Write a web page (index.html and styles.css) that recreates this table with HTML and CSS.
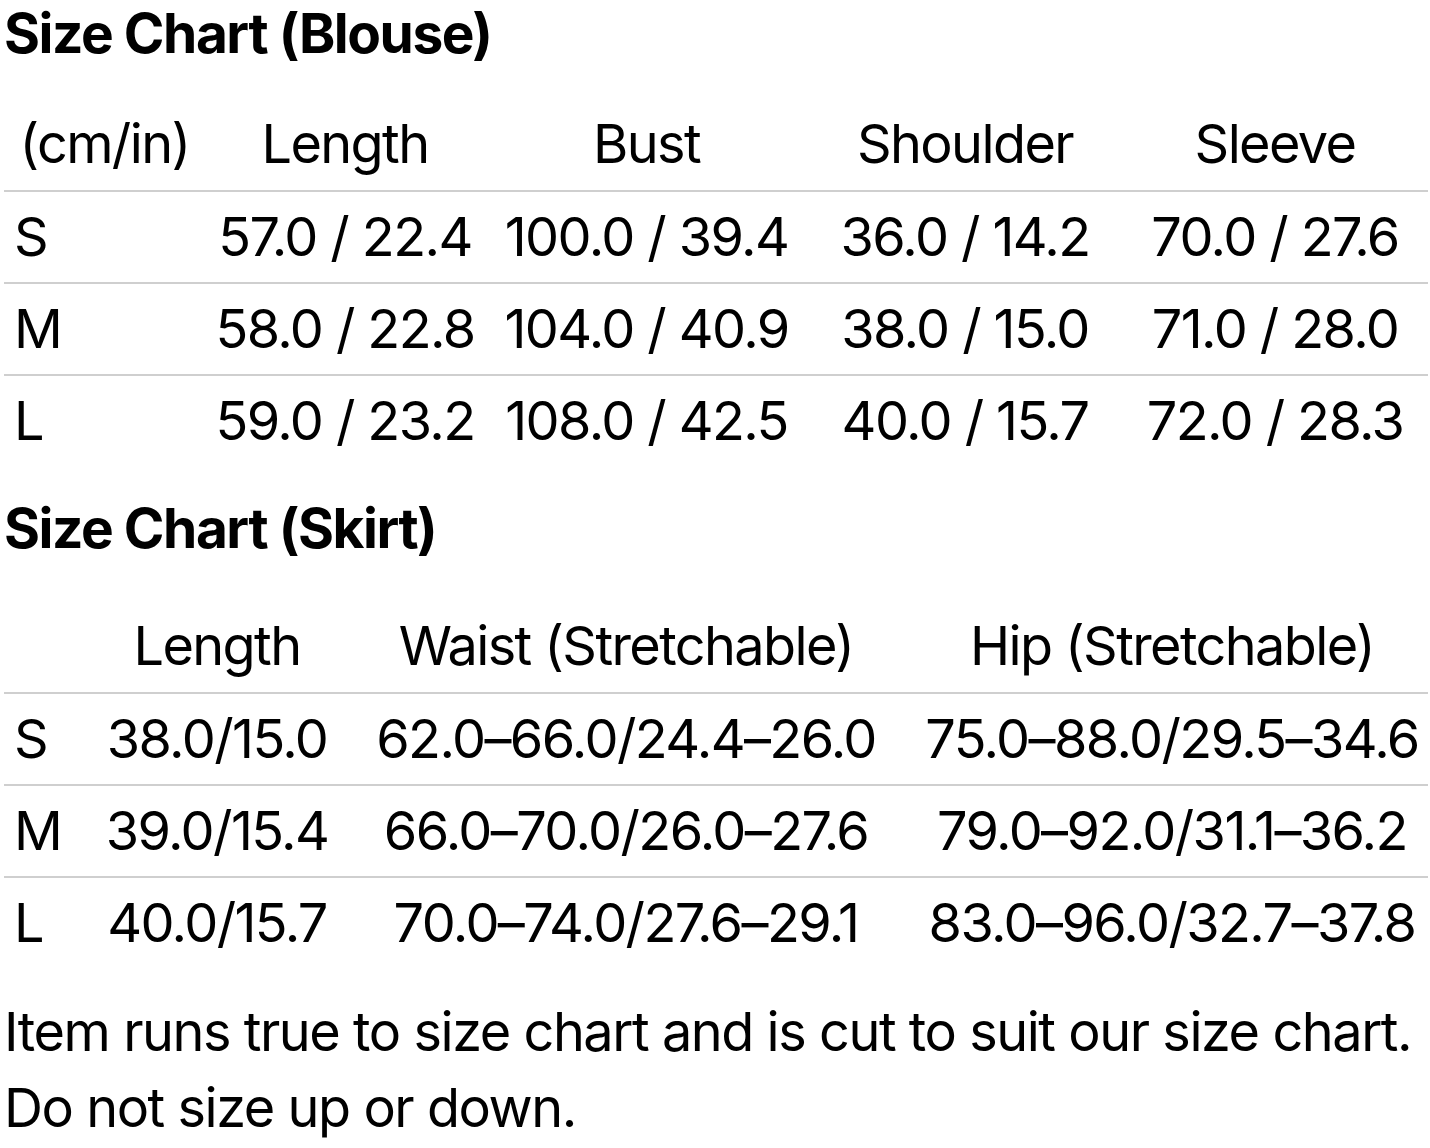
FILE: index.html
```html
<!DOCTYPE html>
<html lang="en">
<head>
<meta charset="utf-8">
<title>Size Chart</title>
<link rel="stylesheet" href="styles.css">
</head>
<body>
<main class="page">
  <section class="chart chart-blouse">
    <h2 class="chart-title">Size Chart (Blouse)</h2>
    <table class="size-table blouse">
      <colgroup>
        <col class="c-size-b"><col class="c-b2"><col class="c-b3"><col class="c-b4"><col class="c-b5">
      </colgroup>
      <thead>
        <tr><th class="unit">(cm/in)</th><th>Length</th><th>Bust</th><th>Shoulder</th><th>Sleeve</th></tr>
      </thead>
      <tbody>
        <tr><td class="size">S</td><td>57.0 / 22.4</td><td>100.0 / 39.4</td><td>36.0 / 14.2</td><td>70.0 / 27.6</td></tr>
        <tr><td class="size">M</td><td>58.0 / 22.8</td><td>104.0 / 40.9</td><td>38.0 / 15.0</td><td>71.0 / 28.0</td></tr>
        <tr><td class="size">L</td><td>59.0 / 23.2</td><td>108.0 / 42.5</td><td>40.0 / 15.7</td><td>72.0 / 28.3</td></tr>
      </tbody>
    </table>
  </section>
  <section class="chart chart-skirt">
    <h2 class="chart-title">Size Chart (Skirt)</h2>
    <table class="size-table skirt">
      <colgroup>
        <col class="c-size-s"><col class="c-s2"><col class="c-s3"><col class="c-s4">
      </colgroup>
      <thead>
        <tr><th class="unit"></th><th>Length</th><th>Waist (Stretchable)</th><th>Hip (Stretchable)</th></tr>
      </thead>
      <tbody>
        <tr><td class="size">S</td><td>38.0/15.0</td><td>62.0–66.0/24.4–26.0</td><td>75.0–88.0/29.5–34.6</td></tr>
        <tr><td class="size">M</td><td>39.0/15.4</td><td>66.0–70.0/26.0–27.6</td><td>79.0–92.0/31.1–36.2</td></tr>
        <tr><td class="size">L</td><td>40.0/15.7</td><td>70.0–74.0/27.6–29.1</td><td>83.0–96.0/32.7–37.8</td></tr>
      </tbody>
    </table>
  </section>
  <p class="note">Item runs true to size chart and is cut to suit our size chart. Do not size up or down.</p>
</main>
</body>
</html>
```
FILE: styles.css
```css
html, body {
  margin: 0;
  padding: 0;
  background: #fff;
}
body {
  font-family: Inter, "Noto Sans", "Liberation Sans", sans-serif;
  color: #000;
}
.page {
  padding: 0 2px 0 4px;
}
.chart-title {
  margin: 0;
  font-size: 55px;
  font-weight: 700;
  line-height: 66px;
  letter-spacing: -1.45px;
}
.chart-blouse .chart-title {
  margin-bottom: 32px;
}
.chart-skirt {
  margin-top: 29px;
}
.chart-skirt .chart-title {
  margin-bottom: 39px;
}
.size-table {
  width: 100%;
  table-layout: fixed;
  border-collapse: collapse;
  font-size: 54px;
  font-weight: 400;
  letter-spacing: -1.6px;
}
.size-table th,
.size-table td {
  padding: 0;
  text-align: center;
  vertical-align: middle;
  font-weight: 400;
  white-space: nowrap;
  line-height: 66px;
}
.size-table th {
  height: 92px;
}
.size-table td {
  height: 90px;
}
.size-table tbody tr {
  border-top: 2px solid #cfcfcf;
}
.size-table td.size {
  text-align: left;
  padding-left: 10px;
}
.c-size-b { width: 201px; }
.c-b2 { width: 280px; }
.c-b3 { width: 323px; }
.c-b4 { width: 314px; }
.c-b5 { width: 306px; }
.c-size-s { width: 94px; }
.c-s2 { width: 238px; }
.c-s3 { width: 580px; }
.c-s4 { width: 512px; }
.note {
  margin: 26px 0 0;
  font-size: 54px;
  line-height: 76px;
  letter-spacing: -1.45px;
}
```
